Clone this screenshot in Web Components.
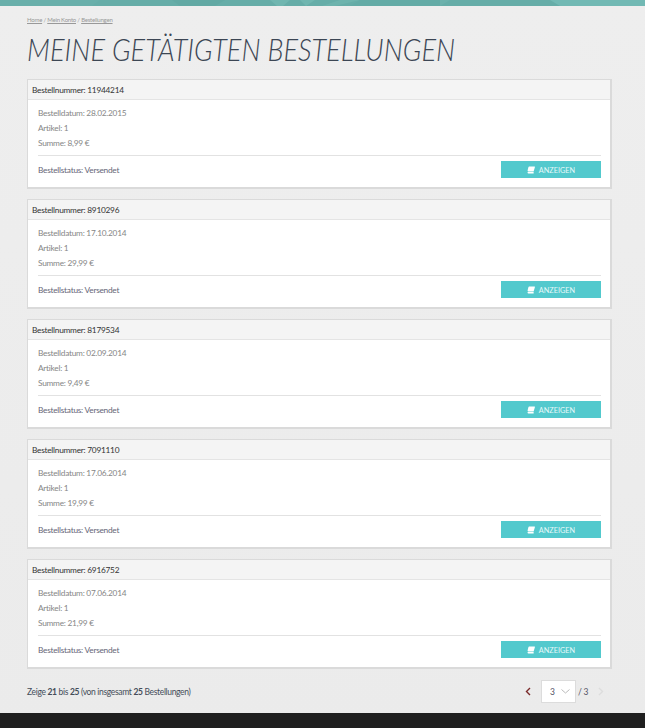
<!DOCTYPE html>
<html><head><meta charset="utf-8">
<style>
html,body{margin:0;padding:0;background:#ececec;font-family:"Lato","Liberation Sans",sans-serif}
</style></head><body>
<shop-page>
<order-card number="11944214" date="28.02.2015" sum="8,99 €"></order-card>
<order-card number="8910296" date="17.10.2014" sum="29,99 €"></order-card>
<order-card number="8179534" date="02.09.2014" sum="9,49 €"></order-card>
<order-card number="7091110" date="17.06.2014" sum="19,99 €"></order-card>
<order-card number="6916752" date="07.06.2014" sum="21,99 €"></order-card>
</shop-page>
<script>
class ShopPage extends HTMLElement{constructor(){super();this.attachShadow({mode:'open'}).innerHTML=`
<style>
:host{display:flex;flex-direction:column;height:728px;overflow:hidden;font-family:"Lato","Liberation Sans",sans-serif;background:linear-gradient(#eee,#ebebeb)}
.top{height:6px;flex:none;display:block;width:100%}
main{flex:1;min-height:0;padding:10px 33px 0 27px;display:flex;flex-direction:column}
nav{font-size:6px;line-height:8px;color:#999;height:8px;letter-spacing:-.22px}
nav u{text-decoration:underline}
h1{margin:4px 0 0;height:41px;font:italic 300 32px/41px "Lato",sans-serif;color:#3c4654;white-space:nowrap;width:max-content;transform:scaleX(.85);transform-origin:0 50%}
.list{display:flex;flex-direction:column;gap:10px;margin-top:10px}
.pager{display:flex;align-items:center;justify-content:space-between;margin-top:5px;height:35px;font-size:8.5px;color:#444c58;letter-spacing:-.33px}
b{font-weight:700}
.p{display:flex;align-items:center;margin-right:8px;color:#556}
.sel{width:35px;height:23px;border:1px solid #dcdcdc;background:#fff;display:flex;align-items:center;justify-content:space-between;padding:0 5px 0 8px;box-sizing:border-box;margin:0 2px 0 10px}
footer{height:15px;background:#1f1f1f;flex:none}
</style>
<svg class="top" viewBox="0 0 645 6" preserveAspectRatio="none"><rect width="645" height="6" fill="#66ada8"/><path d="M0 0H100L92 6H0Z" fill="#69afaa"/><path d="M270 0H290L283 6H277ZM300 0H315L306 6Z" fill="#70b6b0"/><path d="M172 0H225L215 6H180Z" fill="#62a9a4"/><path d="M340 0H360L335 6H322Z" fill="#6db3ad"/><path d="M440 0H450L440 6H420Z" fill="#6cb1ac"/><path d="M560 0H645V6H560L550 0Z" fill="#72b9b4"/><path d="M360 0H440V6H350Z" fill="#63aba6"/></svg>
<main>
<nav><u>Home</u> / <u>Mein Konto</u> / <u>Bestellungen</u></nav>
<h1>MEINE GETÄTIGTEN BESTELLUNGEN</h1>
<div class="list"><slot></slot></div>
<div class="pager"><span>Zeige <b>21</b> bis <b>25</b> (von insgesamt <b>25</b> Bestellungen)</span>
<span class="p"><svg width="6" height="9" viewBox="0 0 6 9"><path d="M5 1L1.5 4.5L5 8" fill="none" stroke="#7a2a2a" stroke-width="1.4"/></svg>
<span class="sel"><span>3</span><svg width="9" height="5" viewBox="0 0 9 5"><path d="M.5.5L4.5 4L8.5.5" fill="none" stroke="#bbb" stroke-width="1"/></svg></span>
<span>/ 3</span><svg style="margin-left:10px" width="6" height="9" viewBox="0 0 6 9"><path d="M1 1L4.5 4.5L1 8" fill="none" stroke="#ddd" stroke-width="1.4"/></svg></span></div>
</main>
<footer></footer>`}}
customElements.define('shop-page',ShopPage);
class OrderCard extends HTMLElement{constructor(){super();this.attachShadow({mode:'open'})}
connectedCallback(){const a=n=>this.getAttribute(n);this.shadowRoot.innerHTML=`
<style>
:host{display:block;height:110px;box-sizing:border-box;border:solid #dadada;border-width:1px 2px 2px 1px;background:#fff;font-family:"Lato","Liberation Sans",sans-serif;font-size:8.3px;letter-spacing:-.25px;color:#868686}
.h{height:20px;box-sizing:border-box;background:#f4f4f4;border-bottom:1px solid #e4e4e4;padding:1px 4px 0;display:flex;align-items:center;color:#333}
.b{padding:5px 9px 0 10px}
.r{height:15px;display:flex;align-items:center}
.f{border-top:1px solid #e2e2e2;margin-top:5px;padding-top:5px;display:flex;justify-content:space-between;align-items:center;color:#667}
.f>span{padding-top:1px}
button{all:unset;box-sizing:border-box;width:100px;height:17px;padding-top:1px;background:#53c9cd;color:#e6f8f9;font:400 7.3px "Lato",sans-serif;letter-spacing:0;display:flex;align-items:center;justify-content:center;gap:4px}
</style>
<div class="h">Bestellnummer: ${a('number')}</div>
<div class="b"><div class="r">Bestelldatum: ${a('date')}</div><div class="r">Artikel: 1</div><div class="r">Summe: ${a('sum')}</div>
<div class="f"><span>Bestellstatus: Versendet</span><button><svg width="8" height="8" viewBox="0 0 8 8"><path d="M2.2.5H7.6C8 .5 8 .9 7.9 1.2L6.6 5.4H1.2C.7 5.4.5 5.1.6 4.6L1.4 1.2C1.5.8 1.8.5 2.2.5Z" fill="#fff"/><path d="M.7 6.1H6.6V7.6H1.3C.6 7.6.4 6.8.7 6.1Z" fill="#fff"/></svg>ANZEIGEN</button></div></div>`}}
customElements.define('order-card',OrderCard);
</script></body></html>
